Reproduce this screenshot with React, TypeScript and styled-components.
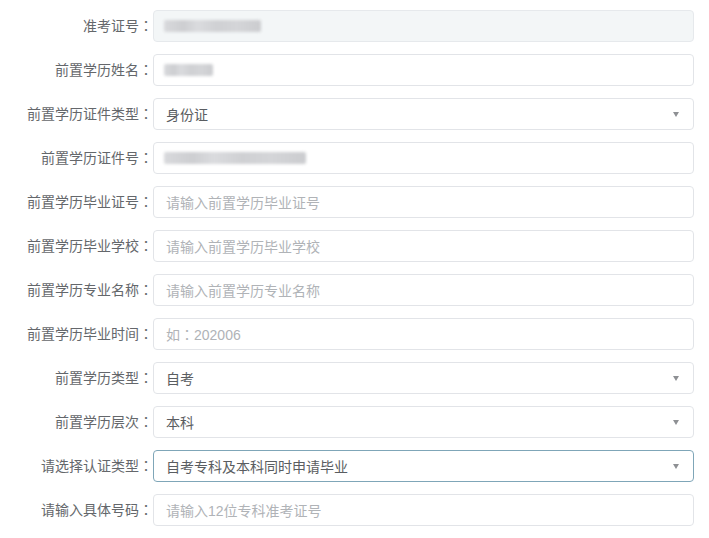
import React from "react";
import styled, { createGlobalStyle, css } from "styled-components";

const Global = createGlobalStyle`
  html, body { margin: 0; padding: 0; background: #ffffff; }
  body { font-family: "Liberation Sans", "Noto Sans CJK SC", sans-serif; }
`;

const Form = styled.div`
  display: flex;
  flex-direction: column;
  gap: 12px;
  padding-top: 10px;
  width: 709px;
`;

const Row = styled.div`
  display: grid;
  grid-template-columns: 153px 541px;
  grid-template-rows: 32px;
  align-items: center;
  height: 32px;
  overflow: hidden;
`;

const Label = styled.label`
  display: block;
  text-align: right;
  font-size: 14px;
  line-height: 16px;
  color: #64676b;
  white-space: nowrap;
`;

const Colon = styled.span`
  font-family: "Noto Sans CJK TC", sans-serif;
  line-height: 0;
`;

type FieldProps = { $disabled?: boolean; $focused?: boolean };

const Field = styled.div<FieldProps>`
  box-sizing: border-box;
  height: 32px;
  display: flex;
  align-items: center;
  padding: 0 12px;
  border: 1px solid #e2e4e8;
  border-radius: 4px;
  background: #ffffff;
  ${(p) =>
    p.$disabled &&
    css`
      background: #f3f6f7;
      border-color: #e6e9ec;
    `}
  ${(p) =>
    p.$focused &&
    css`
      border-color: #7fa6b8;
    `}
`;

const Value = styled.span`
  font-size: 14px;
  color: #5a5d61;
  white-space: nowrap;
`;

const Placeholder = styled.span`
  font-size: 14px;
  color: #b0b3b7;
  white-space: nowrap;
`;

const Blur = styled.span<{ $w: number }>`
  display: block;
  width: ${(p) => p.$w}px;
  height: 12px;
  margin-left: -2px;
  border-radius: 2px;
  filter: blur(1.5px);
  background: linear-gradient(
    90deg,
    #d8d9dc 0%,
    #cdced1 20%,
    #dadbde 35%,
    #cfd0d3 55%,
    #d4d5d8 75%,
    #cbcccf 100%
  );
`;

const Arrow = styled.span`
  margin-left: auto;
  margin-right: 2px;
  width: 0;
  height: 0;
  border-left: 3.5px solid transparent;
  border-right: 3.5px solid transparent;
  border-top: 5px solid #8e9094;
`;

type RowData = {
  label: string;
  kind: "blur" | "value" | "placeholder";
  text?: React.ReactNode;
  blur?: number;
  select?: boolean;
  disabled?: boolean;
  focused?: boolean;
};

const rows: RowData[] = [
  { label: "准考证号", kind: "blur", blur: 97, disabled: true },
  { label: "前置学历姓名", kind: "blur", blur: 49 },
  { label: "前置学历证件类型", kind: "value", text: "身份证", select: true },
  { label: "前置学历证件号", kind: "blur", blur: 142 },
  { label: "前置学历毕业证号", kind: "placeholder", text: "请输入前置学历毕业证号" },
  { label: "前置学历毕业学校", kind: "placeholder", text: "请输入前置学历毕业学校" },
  { label: "前置学历专业名称", kind: "placeholder", text: "请输入前置学历专业名称" },
  {
    label: "前置学历毕业时间",
    kind: "placeholder",
    text: (
      <>
        如<Colon>：</Colon>202006
      </>
    ),
  },
  { label: "前置学历类型", kind: "value", text: "自考", select: true },
  { label: "前置学历层次", kind: "value", text: "本科", select: true },
  {
    label: "请选择认证类型",
    kind: "value",
    text: "自考专科及本科同时申请毕业",
    select: true,
    focused: true,
  },
  { label: "请输入具体号码", kind: "placeholder", text: "请输入12位专科准考证号" },
];

export default function App() {
  return (
    <>
      <Global />
      <Form>
        {rows.map((r) => (
          <Row key={r.label}>
            <Label>
              {r.label}
              <Colon>：</Colon>
            </Label>
            <Field $disabled={r.disabled} $focused={r.focused}>
              {r.kind === "blur" && <Blur $w={r.blur ?? 60} />}
              {r.kind === "value" && <Value>{r.text}</Value>}
              {r.kind === "placeholder" && <Placeholder>{r.text}</Placeholder>}
              {r.select && <Arrow />}
            </Field>
          </Row>
        ))}
      </Form>
    </>
  );
}
